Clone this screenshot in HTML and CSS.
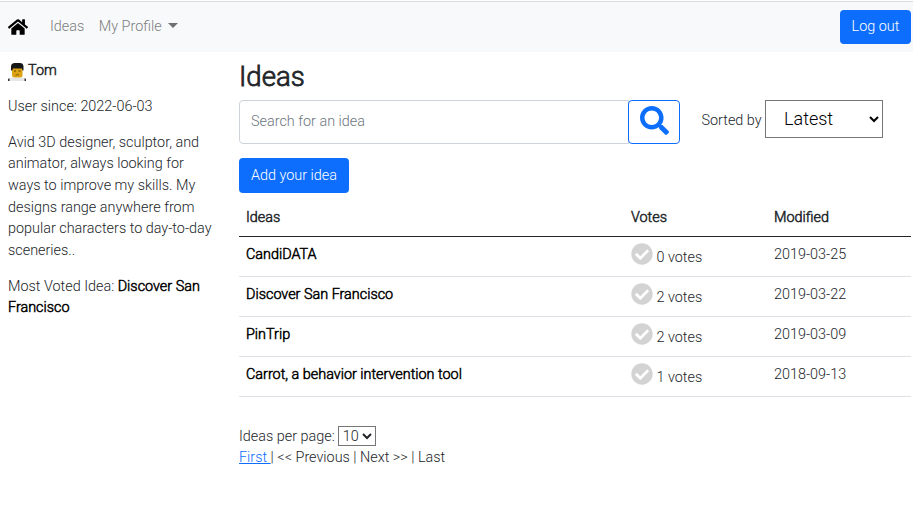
FILE: index.html
```html
<!DOCTYPE html>
<html lang="en">
<head>
<meta charset="utf-8">
<title>Ideas</title>
<link rel="stylesheet" href="styles.css">
</head>
<body>
<nav class="navbar">
  <a class="home" aria-label="Home"><svg viewBox="0 0 576 512"><path d="M280.4 148.3L96 300.1V464a16 16 0 0 0 16 16l112.1-.3a16 16 0 0 0 15.900-16V368a16 16 0 0 1 16-16h64a16 16 0 0 1 16 16v95.600a16 16 0 0 0 16 16.100L464 480a16 16 0 0 0 16-16V300L295.700 148.300a12.200 12.200 0 0 0-15.300 0zM571.600 251.500L488 182.600V44.100a12 12 0 0 0-12-12h-56a12 12 0 0 0-12 12v72.600L318.500 43a48 48 0 0 0-61 0L4.300 251.500a12 12 0 0 0-1.600 16.900l25.500 31a12 12 0 0 0 16.900 1.600L280.400 107.200a12.200 12.200 0 0 1 15.300 0L531 301a12 12 0 0 0 16.900-1.600l25.500-31a12 12 0 0 0-1.800-16.900z"/></svg></a>
  <a class="nav-link">Ideas</a>
  <a class="nav-link">My Profile<span class="caret"></span></a>
  <button class="btn logout">Log out</button>
</nav>
<div class="layout">
  <aside class="sidebar">
    <div class="user">
      <svg class="avatar" viewBox="0 0 18 18"><path d="M1 18q0-3.500 4-3.500h8q4 0 4 3.500z" fill="#e6e6ea"/><path d="M0 18v-2l1.500-1v3zM18 18v-2l-1.500-1v3z" fill="#333"/><rect x="4" y="3" width="10.500" height="11.500" rx="2.500" fill="#dca414"/><path d="M3 7.500V3.500Q3 0 7 0h5q3.500 0 3.500 4v3.500h-1L14 5.500H5L4.200 7.500z" fill="#171717"/><path d="M6 7.500h2v1H6zm4.500 0h2v1h-2zM7.500 11.500h3.500v.8H7.500z" fill="#5a4105"/></svg><b>Tom</b>
    </div>
    <p>User since: 2022-06-03</p>
    <p>Avid 3D designer, sculptor, and animator, always looking for ways to improve my skills. My designs range anywhere from popular characters to day-to-day sceneries..</p>
    <p>Most Voted Idea: <b class="black">Discover San Francisco</b></p>
  </aside>
  <main class="content">
    <h1>Ideas</h1>
    <div class="tools">
      <input class="search" type="text" placeholder="Search for an idea">
      <button class="search-btn" aria-label="Search"><svg viewBox="0 0 512 512"><path d="M505 442.700L405.300 343c-4.500-4.500-10.600-7-17-7H372c27.600-35.300 44-79.700 44-128C416 93.100 322.900 0 208 0S0 93.100 0 208s93.100 208 208 208c48.300 0 92.700-16.400 128-44v16.300c0 6.400 2.500 12.500 7 17l99.700 99.700c9.400 9.400 24.600 9.400 33.900 0l28.300-28.300c9.400-9.400 9.400-24.600.1-34zM208 336c-70.700 0-128-57.200-128-128 0-70.700 57.200-128 128-128 70.700 0 128 57.200 128 128 0 70.700-57.200 128-128 128z"/></svg></button>
      <span class="sort-label">Sorted by</span>
      <select class="sort"><option>Latest</option></select>
    </div>
    <button class="btn add">Add your idea</button>
    <table>
      <thead><tr><th class="c-idea">Ideas</th><th class="c-votes">Votes</th><th>Modified</th></tr></thead>
      <tbody>
        <tr><td class="idea">CandiDATA</td><td><div class="vote"><svg viewBox="0 0 512 512"><path d="M504 256c0 137-111 248-248 248S8 393 8 256 119 8 256 8s248 111 248 248zM227.300 387.300l184-184c6.200-6.200 6.200-16.400 0-22.600l-22.600-22.600c-6.200-6.200-16.400-6.200-22.600 0L216 308.100l-70.100-70.100c-6.200-6.200-16.400-6.200-22.600 0l-22.600 22.600c-6.200 6.200-6.200 16.400 0 22.600l104 104c6.200 6.300 16.400 6.300 22.600.1z"/></svg><span>0 votes</span></div></td><td>2019-03-25</td></tr>
        <tr><td class="idea">Discover San Francisco</td><td><div class="vote"><svg viewBox="0 0 512 512"><path d="M504 256c0 137-111 248-248 248S8 393 8 256 119 8 256 8s248 111 248 248zM227.300 387.300l184-184c6.200-6.200 6.200-16.400 0-22.600l-22.600-22.600c-6.200-6.200-16.400-6.200-22.600 0L216 308.100l-70.100-70.100c-6.200-6.200-16.400-6.200-22.600 0l-22.600 22.600c-6.200 6.200-6.200 16.400 0 22.600l104 104c6.200 6.300 16.400 6.300 22.600.1z"/></svg><span>2 votes</span></div></td><td>2019-03-22</td></tr>
        <tr><td class="idea">PinTrip</td><td><div class="vote"><svg viewBox="0 0 512 512"><path d="M504 256c0 137-111 248-248 248S8 393 8 256 119 8 256 8s248 111 248 248zM227.300 387.300l184-184c6.200-6.200 6.200-16.400 0-22.600l-22.600-22.600c-6.200-6.200-16.400-6.200-22.600 0L216 308.100l-70.100-70.100c-6.200-6.200-16.400-6.200-22.600 0l-22.600 22.600c-6.200 6.200-6.200 16.400 0 22.600l104 104c6.200 6.300 16.400 6.300 22.600.1z"/></svg><span>2 votes</span></div></td><td>2019-03-09</td></tr>
        <tr><td class="idea">Carrot, a behavior intervention tool</td><td><div class="vote"><svg viewBox="0 0 512 512"><path d="M504 256c0 137-111 248-248 248S8 393 8 256 119 8 256 8s248 111 248 248zM227.300 387.300l184-184c6.200-6.200 6.200-16.400 0-22.600l-22.600-22.600c-6.200-6.200-16.400-6.200-22.600 0L216 308.100l-70.100-70.100c-6.200-6.200-16.400-6.200-22.600 0l-22.600 22.600c-6.200 6.200-6.200 16.400 0 22.600l104 104c6.200 6.300 16.400 6.300 22.600.1z"/></svg><span>1 votes</span></div></td><td>2018-09-13</td></tr>
      </tbody>
    </table>
    <div class="per-page"><span>Ideas per page:</span><select class="count"><option>10</option></select></div>
    <div class="pager"><a class="first">First </a>| &lt;&lt; Previous | Next &gt;&gt; | Last</div>
  </main>
</div>
</body>
</html>
```
FILE: styles.css
```css
* { box-sizing: border-box; }
body {
  margin: 0;
  padding-top: 1px;
  background: #fff;
  color: #212529;
  font: 300 14.4px/21.6px Roboto, sans-serif;
}
button, input, select { font: inherit; margin: 0; }
b, th, .idea { font-weight: 300; -webkit-text-stroke: 0.5px currentColor; }
.black, .idea { color: #000; }

.navbar {
  display: flex;
  align-items: center;
  height: 51px;
  padding: 0 2px 0 8px;
  border-top: 1px solid #d9dcdf;
  background: #f8f9fa;
}
.home { display: flex; width: 20px; margin-right: 22px; }
.home svg { width: 20px; height: 18px; }
.nav-link { margin-right: 14.500px; color: #7c7d7e; }
.nav-link + .nav-link { margin-right: 0; }
.caret {
  display: inline-block;
  margin-left: 6px;
  vertical-align: 3px;
  border: 0 solid transparent;
  border-width: 5px 5px 0;
  border-top-color: #6f7071;
}
.btn {
  height: 35px;
  padding: 0;
  border: 0;
  border-radius: 4px;
  background: #0d6efd;
  color: #fff;
}
.logout { width: 71px; height: 34px; margin-left: auto; }

.layout { display: grid; grid-template-columns: 207px 672px; column-gap: 24px; padding-left: 8px; }
.sidebar { padding-top: 7.800px; }
.user { display: flex; height: 21.600px; margin-bottom: 14.400px; }
.avatar { width: 18px; height: 18px; margin: 3.200px 2px 0 0; }
p { margin: 0 0 14.400px; }

h1 { margin: 8px 0 7px; font-size: 27.600px; line-height: 33px; font-weight: 300; -webkit-text-stroke: 0.8px currentColor; }
.tools { display: flex; align-items: flex-start; height: 44px; }
.search {
  width: 390px;
  height: 44px;
  padding: 0 11px 2px;
  border: 1px solid #ced4da;
  border-radius: 4px 0 0 4px;
  outline: 0;
}
.search::placeholder { color: #6c757d; opacity: 1; }
.search-btn {
  display: flex;
  justify-content: center;
  width: 52px;
  height: 44px;
  margin-left: -1px;
  padding: 5px 0 0;
  border: 1px solid #0d6efd;
  border-radius: 4px;
  background: #fff;
}
.search-btn svg { width: 29px; height: 29px; fill: #0d6efd; }
.sort-label { width: 63.500px; margin: 10px 0 0 21.500px; white-space: nowrap; }
.sort {
  width: 118px;
  height: 38px;
  padding: 0 0 2px 14px;
  border: 1px solid #767676;
  border-radius: 0;
  background: #fff;
  color: #000;
  font-size: 18px;
}
.add { display: block; width: 110px; margin-top: 14px; }

table { width: 100%; margin-top: 6px; border-collapse: separate; border-spacing: 0; }
th, td { padding: 7px 7px 0; text-align: left; vertical-align: top; }
th { height: 38px; padding-top: 8px; border-bottom: 1px solid #212529; }
td { height: 40px; border-bottom: 1px solid #dee2e6; }
.c-idea { width: 385px; }
.c-votes { width: 143px; }
.vote { display: flex; }
.vote svg { width: 22px; height: 22px; margin: -1px 3.500px 0 0; fill: #d3d3d3; }
.vote span { margin-top: 3px; }

.per-page { display: flex; height: 21px; margin-top: 29px; gap: 3px; }
.count {
  width: 38px;
  height: 20px;
  padding: 0;
  border: 1px solid #767676;
  border-radius: 0;
  background: #fff;
  color: #212529;
}
.first { color: #0d6efd; text-decoration: underline; white-space: pre; }
```
